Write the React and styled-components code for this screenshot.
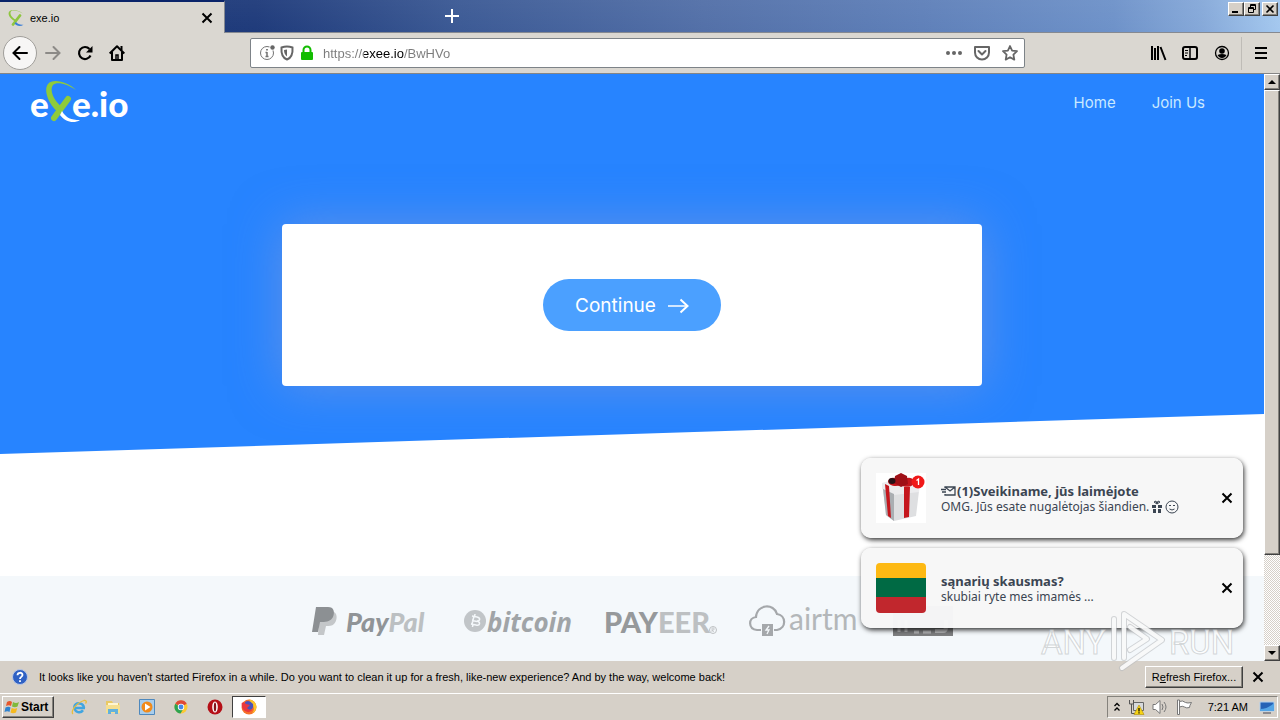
import React from "react";
import styled, { createGlobalStyle, css } from "styled-components";

const uiFont = `"Liberation Sans", Tahoma, sans-serif`;
const siteFont = `Inter, Montserrat, sans-serif`;

const GlobalStyle = createGlobalStyle`
  *, *::before, *::after { box-sizing: border-box; }
  body { margin: 0; font-family: ${uiFont}; font-size: 11px; color: #000; background: #d6d0c8; }
  button { font: inherit; color: inherit; padding: 0; margin: 0; }
  svg { display: block; flex: none; overflow: visible; }
`;

const Desktop = styled.div`
  display: flex;
  flex-direction: column;
  min-height: 100vh;
`;

/* ---------- browser chrome ---------- */

const TitleBar = styled.header`
  display: flex;
  height: 33px;
  border-bottom: 1px solid #858991;
  background:
    linear-gradient(180deg, rgba(255, 255, 255, 0.04), rgba(255, 255, 255, 0)),
    linear-gradient(90deg, #1a3878 0%, #1f3b7b 20%, #3c5a95 36%, #5370a8 55%, #5f80b9 72%, #6e92c9 87%, #86a9d9 94%, #a4c8ef 100%);
`;

const Tab = styled.div`
  display: flex;
  align-items: center;
  gap: 6px;
  width: 225px;
  height: 33px;
  padding: 0 9px 0 8px;
  border-top: 2px solid #0a246a;
  border-right: 1px solid #858991;
  background: #dad7d1;
`;

const TabTitle = styled.span`
  flex: 1;
  line-height: 16px;
`;

const PlainButton = styled.button`
  display: flex;
  align-items: center;
  justify-content: center;
  width: ${(p) => p.$w || 16}px;
  height: ${(p) => p.$h || 16}px;
  border: 0;
  background: none;
`;

const NewTab = styled(PlainButton)`
  height: 32px;
  width: 32px;
  margin-left: 211px;
`;

const WindowControls = styled.div`
  display: flex;
  margin-left: auto;
  padding: 2px 2px 0 0;
`;

const raised = css`
  border: 1px solid;
  border-color: #fff #404040 #404040 #fff;
  box-shadow: inset -1px -1px 0 #85827c;
  background: #d6d0c8;
`;

const WindowButton = styled.button`
  ${raised}
  display: flex;
  align-items: center;
  justify-content: center;
  width: 16px;
  height: 14px;
  margin-left: ${(p) => (p.$apart ? 2 : 0)}px;
`;

const Toolbar = styled.nav`
  display: flex;
  align-items: center;
  height: 41px;
  border-bottom: 1px solid #858585;
  background: #dad7d1;
`;

const ToolGroup = styled.div`
  display: flex;
  align-items: center;
  width: ${(p) => p.$w}px;
  padding-left: ${(p) => p.$pad}px;
`;

const BackButton = styled.button`
  display: flex;
  align-items: center;
  justify-content: center;
  width: 34px;
  height: 34px;
  border: 1px solid #a09e9a;
  border-radius: 50%;
  background: #f7f6f5;
`;

const UrlBar = styled.div`
  display: flex;
  align-items: center;
  flex: 1;
  gap: 4px;
  height: 30px;
  padding: 0 2px 0 8px;
  border: 1px solid #7d8388;
  border-radius: 2px;
  background: #fff;
`;

const UrlInput = styled.input`
  flex: 1;
  min-width: 0;
  height: 24px;
  padding: 0;
  margin-left: 4px;
  border: 0;
  outline: 0;
  font-family: ${uiFont};
  font-size: 13px;
  color: transparent;
  background: linear-gradient(90deg, #7b7b7b 41px, #000 41px, #000 81px, #7b7b7b 81px);
  background-clip: text;
  -webkit-background-clip: text;
`;

const Separator = styled.span`
  width: 1px;
  height: 33px;
  margin: 0 3px 0 3px;
  background: #bfbcb7;
`;

/* ---------- web page ---------- */

const Viewport = styled.div`
  position: relative;
  display: flex;
  flex: 1;
`;

const Page = styled.main`
  display: flex;
  flex-direction: column;
  flex: 1;
  min-width: 0;
  background: #fff;
`;

const Hero = styled.section`
  padding-bottom: 68px;
  background: #2784ff;
  clip-path: polygon(0 0, 100% 0, 100% calc(100% - 40px), 0 100%);
`;

const SiteHeader = styled.div`
  display: flex;
  align-items: center;
  justify-content: space-between;
  height: 58px;
  padding: 0 59px 0 30px;
`;

const SiteNav = styled.nav`
  display: flex;
  gap: 36px;
`;

const SiteLink = styled.a`
  font-family: ${siteFont};
  font-size: 15px;
  line-height: 20px;
  color: #c9e9ff;
  text-decoration: none;
`;

const Card = styled.div`
  display: flex;
  align-items: center;
  justify-content: center;
  max-width: 700px;
  height: 162px;
  margin: 92px auto 0;
  border-radius: 4px;
  background: #fff;
  box-shadow: 0 0 50px rgba(154, 160, 210, 0.5);
`;

const ContinueButton = styled.button`
  display: flex;
  align-items: center;
  justify-content: center;
  gap: 12px;
  width: 178px;
  height: 52px;
  border: 0;
  border-radius: 26px;
  background: #4ba0ff;
  color: #fff;
  font-family: ${siteFont};
  font-size: 19px;
`;

const Partners = styled.section`
  display: flex;
  flex: 1;
  justify-content: center;
  gap: 32px;
  min-height: 85px;
  margin-top: 122px;
  padding-top: 30px;
  background: #f4f8fb;
`;

/* ---------- scrollbar ---------- */

const ScrollBar = styled.div`
  display: flex;
  flex-direction: column;
  width: 16px;
  background: repeating-conic-gradient(#fff 0 25%, #d6d0c8 0 50%) 0 0 / 2px 2px;
`;

const ScrollButton = styled.button`
  ${raised}
  display: flex;
  align-items: center;
  justify-content: center;
  height: 16px;
`;

const ScrollThumb = styled.div`
  ${raised}
  flex: 465;
`;

const ScrollRest = styled.div`
  flex: 90;
`;

/* ---------- notifications over the page ---------- */

const ToastStack = styled.aside`
  position: absolute;
  right: 37px;
  bottom: 33px;
  display: flex;
  flex-direction: column;
  gap: 10px;
  width: 382px;
`;

const Toast = styled.article`
  display: flex;
  align-items: center;
  height: 80px;
  padding: 0 10px 0 15px;
  border-radius: 10px;
  background: rgba(247, 247, 247, 0.98);
  box-shadow: 1px 2px 5px rgba(0, 0, 0, 0.8);
`;

const ToastText = styled.div`
  flex: 1;
  margin-left: 15px;
  padding-top: 2px;
  font-family: "Noto Sans", "Open Sans", sans-serif;
  font-size: 13px;
  line-height: 16px;
  color: #3b4552;
`;

const ToastTitle = styled.strong`
  display: flex;
  align-items: center;
`;

const ToastBody = styled.span`
  display: flex;
  align-items: center;
  gap: 2px;
  font-size: 12px;
`;

const Watermark = styled.div`
  position: absolute;
  right: 46px;
  bottom: -12px;
  pointer-events: none;
`;

/* ---------- info bar and taskbar ---------- */

const InfoBar = styled.div`
  display: flex;
  align-items: center;
  height: 32px;
  padding: 0 14px 0 12px;
  background: #d6d0c8;
`;

const InfoText = styled.span`
  flex: 1;
  margin-left: 11px;
`;

const RefreshButton = styled.button`
  ${raised}
  width: 98px;
  height: 22px;
  margin-right: 7px;
`;

const Taskbar = styled.footer`
  display: flex;
  align-items: center;
  height: 27px;
  padding: 0 2px;
  border-top: 1px solid #fff;
  background: #d6d0c8;
`;

const StartButton = styled.button`
  ${raised}
  display: flex;
  align-items: center;
  gap: 1px;
  width: 52px;
  height: 22px;
  padding-left: 1px;
  font-weight: 700;
  font-size: 12px;
`;

const QuickLaunch = styled.div`
  display: flex;
  align-items: center;
  margin-left: 8px;
`;

const TaskButton = styled.button`
  display: flex;
  align-items: center;
  justify-content: center;
  width: 34px;
  height: 22px;
  border: 1px solid;
  border-color: ${(p) => (p.$active ? "#404040 #fff #fff #404040" : "transparent")};
  background: ${(p) => (p.$active ? "#fff" : "none")};
`;

const Tray = styled.div`
  display: flex;
  align-items: center;
  gap: 8px;
  height: 22px;
  margin-left: auto;
  padding: 0 2px 0 6px;
  border: 1px solid;
  border-color: #85827c #fff #fff #85827c;
`;

const Clock = styled.time`
  margin: 0 3px 0 8px;
`;

/* ---------- icons ---------- */

const Icon = ({ size = 16, w, h, vb, children, ...rest }) => (
  <svg width={w || size} height={h || size} viewBox={vb || `0 0 ${w || size} ${h || size}`} fill="none" aria-hidden="true" {...rest}>
    {children}
  </svg>
);

const Cross = () => (
  <Icon size={12} stroke="#000" strokeWidth="2"><path d="M1.500 1.500l9 9M10.500 1.500l-9 9" /></Icon>
);

const Favicon = () => (
  <Icon size={16}>
    <path d="M15 3.500C9 0 3-.5 2.500 2.500c-.5 3 3 6.500 6.500 8l-1 1.500C3.500 9.500-.5 5.500.8 2.200 2.500-1.500 10-.5 15 3.500z" fill="#8fc63f" />
    <path d="M12 5.500L5 14.500" stroke="#8fc63f" strokeWidth="2.800" strokeLinecap="round" />
    <path d="M8 12c2 2.300 4 3 7.500 2.700-2.800 2-7 1.600-9-1.200z" fill="#3d7fd6" />
  </Icon>
);

const SiteLogo = () => (
  <svg width="100" height="44" viewBox="0 0 100 44" role="img" aria-label="exe.io">
    <g fill="#fff" fontFamily="Lato, sans-serif" fontWeight="900" fontSize="35">
      <text x="0" y="36">e</text>
      <text x="42" y="36">e.io</text>
    </g>
    <path d="M46 9C37 3 27 0 23 4c-4 5 1 16 9 22l-4 5C19 24 13 9 18 3c5-6 20-2 28 6z" fill="#8fcb3b" />
    <path d="M38 18L24 37" stroke="#8fcb3b" strokeWidth="6" strokeLinecap="round" />
    <path d="M32 30c4 7 9 9 18 9-6 4-15 2-20-5z" fill="#fff" />
  </svg>
);

const PayPal = () => (
  <svg width="119" height="36" viewBox="0 0 119 36" role="img" aria-label="PayPal">
    <path d="M8 6h14c4 2 3 9 0 12-2 2-5 2-8 2l-2 9H6z" fill="#c4c7c9" />
    <path d="M4 1h12c6 0 7 5 5 10-2 4-6 5-11 5H8L6 26H0z" fill="#8c9093" />
    <text x="34" y="26" fill="#909497" fontFamily="Lato, sans-serif" fontStyle="italic" fontWeight="900" fontSize="27">
      Pay<tspan fill="#bcc0c2">Pal</tspan>
    </text>
  </svg>
);

const Bitcoin = () => (
  <svg width="111" height="40" viewBox="0 0 111 40" role="img" aria-label="bitcoin">
    <circle cx="12" cy="15" r="11" fill="#c1c5c8" />
    <path d="M9 10l5 1c4 1 3 4 0 4 4 1 3 5-1 4l-5-1M11 10l-2 8M12 8l-.5 3M10 18l-.5 3M9 14.500l5 1" stroke="#f4f8fb" strokeWidth="1.500" fill="none" />
    <text x="24" y="26" fill="#a0a4a7" fontFamily="Open Sans, sans-serif" fontStyle="italic" fontWeight="700" fontSize="26">bitcoin</text>
  </svg>
);

const Payeer = () => (
  <svg width="111" height="40" viewBox="0 0 111 40" role="img" aria-label="PAYEER">
    <text x="-2" y="27" fill="#96999b" fontFamily="Lato, sans-serif" fontWeight="900" fontSize="29">
      PAY<tspan fill="#bdc0c2">EER</tspan>
    </text>
    <circle cx="107" cy="24" r="3.500" stroke="#bdc0c2" fill="none" />
    <path d="M106 26v-4h2v2h-2l2 2" stroke="#bdc0c2" strokeWidth=".7" fill="none" />
  </svg>
);

const Airtm = () => (
  <svg width="112" height="40" viewBox="0 0 112 40" role="img" aria-label="airtm">
    <path d="M12 24H8c-9-1-9-12-1-13C8-2 25-3 28 8c9 1 10 14 0 16h-3" stroke="#a5a8ab" strokeWidth="2.200" fill="none" />
    <path d="M13 18h11v12H13z" fill="#a5a8ab" />
    <path d="M20 20l-3 4h3l-2 4" stroke="#f4f8fb" strokeWidth="1.300" fill="none" />
    <text x="40" y="24" fill="#b3b7b9" fontFamily="Lato, sans-serif" fontSize="30">airtm</text>
  </svg>
);

const PlainBadge = () => (
  <Icon w={60} h={32}>
    <path d="M0 0h60v30H0z" fill="#7e7f80" />
    <path d="M6 26V14M13 26V14M21 26h5M30 26h8" stroke="#b5b6b7" strokeWidth="3" />
    <path d="M42 25h8q3 0 3-4v-7" stroke="#b5b6b7" strokeWidth="4" />
  </Icon>
);

const Gift = () => (
  <Icon size={50}>
    <path d="M0 0h50v50H0z" fill="#fff" />
    <path d="M7 16l12 5 24-3-3 25-22 5-8-6z" fill="#dedfe1" />
    <path d="M6 10l18-5 20 5-1 9-25 3L6 16z" fill="#ececee" />
    <path d="M7 16l11 5v27l-8-6z" fill="#aaaeb2" />
    <path d="M28 14h6l-1 30-5 1zM9 11l4 2 2 32-3-2z" fill="#c5161d" />
    <path d="M25 9c-5-6-12-5-13-1 0 5 8 6 13 4 6 4 14 1 13-4-2-5-9-3-12-1z" fill="#c5161d" />
    <path d="M19 3l6-3 6 3 1 8-7 3-7-4z" fill="#9f1017" />
    <ellipse cx="16" cy="8" rx="3.500" ry="3" fill="#251116" />
    <circle cx="42" cy="9" r="6.500" fill="#f01818" />
    <path d="M40.500 7.500l2-1.500v6" stroke="#fff" strokeWidth="1.300" />
  </Icon>
);

const Flag = () => (
  <Icon size={50}>
    <clipPath id="flagCorners"><rect width="50" height="50" rx="4" /></clipPath>
    <g clipPath="url(#flagCorners)">
      <path d="M0 0h50v15H0z" fill="#fdb913" />
      <path d="M0 15h50v19H0z" fill="#006a44" />
      <path d="M0 34h50v16H0z" fill="#c1272d" />
    </g>
  </Icon>
);

const App = () => (
  <>
    <GlobalStyle />
    <Desktop>
      <TitleBar>
        <Tab>
          <Favicon />
          <TabTitle>exe.io</TabTitle>
          <PlainButton aria-label="Close tab"><Cross /></PlainButton>
        </Tab>
        <NewTab aria-label="New tab">
          <Icon size={14} stroke="#fff" strokeWidth="2"><path d="M7 0v14M0 7h14" /></Icon>
        </NewTab>
        <WindowControls>
          <WindowButton aria-label="Minimize"><Icon size={10}><path d="M1 7h6v2H1z" fill="#000" /></Icon></WindowButton>
          <WindowButton aria-label="Restore">
            <Icon size={10} stroke="#000"><path d="M3.500 3V.5h5v5H6M3 1.500h6M1.500 3.500h5v5h-5zM1 4.500h6" /></Icon>
          </WindowButton>
          <WindowButton aria-label="Close" $apart><Icon size={10} stroke="#000" strokeWidth="1.600"><path d="M1.500 1.500l7 7M8.500 1.500l-7 7" /></Icon></WindowButton>
        </WindowControls>
      </TitleBar>

      <Toolbar aria-label="Navigation">
        <ToolGroup $w={250} $pad={3}>
          <BackButton aria-label="Back">
            <Icon size={16} stroke="#000" strokeWidth="2" strokeLinecap="round"><path d="M15 8H2M7.500 2L1.500 8l6 6" /></Icon>
          </BackButton>
          <PlainButton $w={32} $h={32} aria-label="Forward">
            <Icon size={16} stroke="#8c8a87" strokeWidth="2" strokeLinecap="round"><path d="M1 8h13M8.500 2l6 6-6 6" /></Icon>
          </PlainButton>
          <PlainButton $w={32} $h={32} aria-label="Reload">
            <Icon size={16} stroke="#000" strokeWidth="2.200"><path d="M13.500 10.500A6 6 0 1 1 12.500 4" /><path d="M15.500 1v6.500H9z" fill="#000" stroke="none" /></Icon>
          </PlainButton>
          <PlainButton $w={32} $h={32} aria-label="Home">
            <Icon size={16} stroke="#000" strokeWidth="2"><path d="M.7 8.500L8 1.300l7.300 7.200M3 7v8h10V7" strokeLinejoin="round" /><path d="M7 14v-4h2v4" strokeWidth="1.500" /><path d="M12.500 1v4" /></Icon>
          </PlainButton>
        </ToolGroup>
        <UrlBar>
          <Icon size={16} stroke="#737373"><circle cx="8" cy="8" r="6.500" /><path d="M8 7v5M6.500 7.500H8M6.500 11.500h3" strokeWidth="1.500" /><path d="M8 4v1.500" strokeWidth="1.800" /><circle cx="13.500" cy="2.500" r="3" fill="#fff" stroke="none" /><circle cx="13.500" cy="2.500" r="2.200" fill="#666" stroke="none" /></Icon>
          <Icon size={16} stroke="#666" strokeWidth="2"><path d="M2.500 2.500Q8 .5 13.500 2.500C14 9 12 13 8 14.500 4 13 2 9 2.500 2.500z" /><path d="M8 4.500v7C6 10 5 8 5 5z" fill="#666" stroke="none" /></Icon>
          <Icon size={16}><rect x="2" y="7" width="12" height="8" rx="1" fill="#12bc00" /><path d="M4.500 7V5a3.500 3.500 0 0 1 7 0v2" stroke="#12bc00" strokeWidth="2" /></Icon>
          <UrlInput aria-label="Address" defaultValue="https://exee.io/BwHVo" spellCheck={false} />
          <PlainButton $w={24} aria-label="Page actions"><Icon size={16}><g fill="#666"><circle cx="2" cy="8" r="2" /><circle cx="8" cy="8" r="2" /><circle cx="14" cy="8" r="2" /></g></Icon></PlainButton>
          <PlainButton $w={24} aria-label="Save to Pocket"><Icon size={16} stroke="#666" strokeWidth="2" strokeLinejoin="round"><path d="M1 2h14v5.500a7 7 0 0 1-14 0z" /><path d="M4.500 6L8 9.500 11.500 6" strokeLinecap="round" /></Icon></PlainButton>
          <PlainButton $w={24} aria-label="Bookmark"><Icon size={16} stroke="#666" strokeWidth="1.800" strokeLinejoin="round"><path d="M8 1l2.100 4.600 4.900.6-3.600 3.400.9 5L8 12.200l-4.300 2.400.9-5L1 6.200l4.900-.6z" /></Icon></PlainButton>
        </UrlBar>
        <ToolGroup $w={255} $pad={117}>
          <PlainButton $w={32} $h={32} aria-label="Library"><Icon size={16} stroke="#000" strokeWidth="2"><path d="M2 1v14M5 3v12M8 1v14M10.500 2l5 13" /></Icon></PlainButton>
          <PlainButton $w={32} $h={32} aria-label="Sidebar"><Icon size={16} stroke="#000" strokeWidth="2"><rect x="1" y="2" width="14" height="12" rx="2" /><path d="M8 2v12" strokeWidth="1.500" /><path d="M3 5.500h3M3 8h3M3 10.500h2" strokeWidth="1" /></Icon></PlainButton>
          <PlainButton $w={32} $h={32} aria-label="Account"><Icon size={16} stroke="#000"><circle cx="8" cy="8" r="6.500" strokeWidth="1.300" /><circle cx="8" cy="6" r="2.800" fill="#000" stroke="none" /><path d="M3.500 10Q8 8 12.500 10 11 13 8 13T3.500 10z" fill="#000" stroke="none" /></Icon></PlainButton>
          <Separator />
          <PlainButton $w={32} $h={32} aria-label="Menu"><Icon size={12} stroke="#000" strokeWidth="2"><path d="M0 1h12M0 6h12M0 11h12" /></Icon></PlainButton>
        </ToolGroup>
      </Toolbar>

      <Viewport>
        <Page>
          <Hero>
            <SiteHeader>
              <SiteLogo />
              <SiteNav>
                <SiteLink href="#home">Home</SiteLink>
                <SiteLink href="#join">Join Us</SiteLink>
              </SiteNav>
            </SiteHeader>
            <Card>
              <ContinueButton>
                Continue
                <Icon w={21} h={12} stroke="#fff" strokeWidth="1.500"><path d="M0 7h19" /><path d="M12.500 .5L19.500 7l-7 6.500" strokeWidth="2" /></Icon>
              </ContinueButton>
            </Card>
          </Hero>
          <Partners>
            <PayPal />
            <Bitcoin />
            <Payeer />
            <Airtm />
            <PlainBadge />
          </Partners>
        </Page>
        <ScrollBar>
          <ScrollButton aria-label="Scroll up"><Icon w={8} h={4}><path d="M0 4l4-4 4 4z" fill="#000" /></Icon></ScrollButton>
          <ScrollThumb />
          <ScrollRest />
          <ScrollButton aria-label="Scroll down"><Icon w={8} h={4}><path d="M0 0h8L4 4z" fill="#000" /></Icon></ScrollButton>
        </ScrollBar>

        <ToastStack>
          <Toast>
            <Gift />
            <ToastText>
              <ToastTitle>
                <Icon w={16} h={12} stroke="#3b4552" strokeWidth="1.300"><path d="M4 3V2h10v8H4V9M4 2l5 4 5-4M0 4.500h5M1 7h4" /></Icon>
                (1)Sveikiname, jūs laimėjote
              </ToastTitle>
              <ToastBody>
                OMG. Jūs esate nugalėtojas šiandien.
                <Icon w={12} h={14}><path d="M1 5h4v3H1zM7 5h4v3H7zM2 9h3v4H2zM7 9h3v4H7z" fill="#3b4552" /><path d="M6 4L3 2l2-1 1 3 1-3 2 1z" stroke="#3b4552" /></Icon>
                <Icon size={14} stroke="#3b4552"><circle cx="7" cy="7" r="6" /><path d="M4 5.500h2M8 5.500h2M4.500 9Q7 11 9.500 9" /></Icon>
              </ToastBody>
            </ToastText>
            <PlainButton $w={12} aria-label="Close notification"><Cross /></PlainButton>
          </Toast>
          <Toast>
            <Flag />
            <ToastText>
              <ToastTitle>sąnarių skausmas?</ToastTitle>
              <ToastBody>skubiai ryte mes imamės ...</ToastBody>
            </ToastText>
            <PlainButton $w={12} aria-label="Close notification"><Cross /></PlainButton>
          </Toast>
        </ToastStack>

        <Watermark>
          <svg width="196" height="64" viewBox="0 0 196 64" role="img" aria-label="ANY RUN">
            <g fill="#fff" fillOpacity=".75" stroke="#b9bdc0" strokeOpacity=".6" strokeWidth="1" fontFamily="Roboto, sans-serif" fontSize="33">
              <text x="3" y="45">ANY</text>
              <text x="131" y="45">RUN</text>
            </g>
            <g fill="none" strokeLinejoin="round" strokeLinecap="round">
              <g stroke="#b9bdc0" strokeOpacity=".6" strokeWidth="6">
                <path d="M76 49V10M86 49V5l38 26-40 28M92 41l17-11-17-12" />
              </g>
              <g stroke="#fff" strokeOpacity=".85" strokeWidth="4">
                <path d="M76 49V10M86 49V5l38 26-40 28M92 41l17-11-17-12" />
              </g>
            </g>
          </svg>
        </Watermark>
      </Viewport>

      <InfoBar>
        <Icon size={16}><circle cx="8" cy="8" r="7.500" fill="#2f61c4" stroke="#b9c7e4" /><path d="M5.500 6.200C5.500 3 10.500 3 10.500 6 10.500 8 8 7.800 8 10M8 11.300v1.700" stroke="#fff" strokeWidth="1.800" /></Icon>
        <InfoText>It looks like you haven't started Firefox in a while. Do you want to clean it up for a fresh, like-new experience? And by the way, welcome back!</InfoText>
        <RefreshButton>R<u>e</u>fresh Firefox...</RefreshButton>
        <PlainButton aria-label="Dismiss"><Cross /></PlainButton>
      </InfoBar>

      <Taskbar>
        <StartButton>
          <Icon size={16}><path d="M3 3q3-2 5 0L7 7Q5 5.500 2 7z" fill="#e8572b" /><path d="M9 3q3 2 6 0l-1.500 4.500Q11 9 8 7.500z" fill="#80b93c" /><path d="M1.500 8.500q3-1.500 5 0l-1 4.500q-2-1.500-5 0z" fill="#2f83cf" /><path d="M7.700 9q3 1.500 5.500 0L12 13.500q-3 1.500-5.500 0z" fill="#f6b91e" /></Icon>
          Start
        </StartButton>
        <QuickLaunch>
          <TaskButton aria-label="Internet Explorer">
            <Icon size={16}><path d="M14 9H3.500a4.700 4.700 0 0 0 8.500 2.300M13 9A5 5 0 0 0 3.200 8" stroke="#41a5e0" strokeWidth="2.500" /><path d="M2 15C-1 13 5 4 13 1.500c3-.5 2.500 2 1.500 3" stroke="#e8bd3a" strokeWidth="1.300" /></Icon>
          </TaskButton>
          <TaskButton aria-label="File Explorer">
            <Icon size={16}><path d="M1 2h6l1 2h6v10H1z" fill="#e9c964" /><path d="M3 4h10v4H3z" fill="#fff6d2" /><path d="M1 6h14v8H1z" fill="#f5df91" /><path d="M3 15v-5h10v5h-3v-2H6v2z" fill="#62b1dc" /></Icon>
          </TaskButton>
          <TaskButton aria-label="Media Player">
            <Icon size={16}><path d="M.5.5h15v15H.5z" fill="#a8cdec" stroke="#4e88bd" /><circle cx="8" cy="8" r="5.500" fill="#f18a1a" /><path d="M6 4.500L11.500 8 6 11.500z" fill="#fff" /></Icon>
          </TaskButton>
          <TaskButton aria-label="Chrome">
            <Icon size={16}><circle cx="8" cy="8" r="6.500" fill="#fcc934" /><path d="M8 8L2.300 4.700A6.500 6.500 0 0 1 13.700 4.700z" fill="#df4937" /><path d="M8 8h-1L2.300 4.700A6.500 6.500 0 0 0 7.500 14.500L10.500 9.500z" fill="#2da351" /><circle cx="8" cy="8" r="3.200" fill="#fff" /><circle cx="8" cy="8" r="2.400" fill="#4688e8" /></Icon>
          </TaskButton>
          <TaskButton aria-label="Opera">
            <Icon size={16}><circle cx="8" cy="8" r="7.500" fill="#b50f17" /><ellipse cx="8" cy="8" rx="2.800" ry="5.500" fill="#fff" /><ellipse cx="8" cy="8" rx="1.200" ry="4.500" fill="#83141a" /></Icon>
          </TaskButton>
          <TaskButton $active aria-label="Firefox">
            <Icon size={16}><circle cx="8" cy="8" r="7.500" fill="#f6702a" /><path d="M8 .5q7 1 7.500 7.500Q15 13 11 14.500 15 9 11 6z" fill="#fbc52c" /><path d="M4 3q4-3 8 2 1 5-3 6-5 0-5-4z" fill="#4a52bb" /><path d="M.7 4Q3 2 5 5l4 1-3 3q2 3 6 1-3 5-8 2Q0 9 .7 4z" fill="#e9373e" /></Icon>
          </TaskButton>
        </QuickLaunch>
        <Tray>
          <Icon w={6} h={10} stroke="#000" strokeWidth="1.300"><path d="M.5 4L3 1.500 5.500 4M.5 8.500L3 6l2.500 2.500" /></Icon>
          <Icon size={16}><path d="M5.500 3.500h10v8h-10z" fill="#d7dadd" stroke="#666" /><path d="M1.500 1v4h4V1M3.500 5v9.500H8" stroke="#555" /><path d="M11 6l5 9.500H6z" fill="#f7d414" stroke="#ad8c08" strokeWidth=".6" /><path d="M11 9v3.500M11 13.300v1.200" stroke="#000" strokeWidth="1.200" /></Icon>
          <Icon size={16} stroke="#777"><path d="M1 5.500h2.500L8 1.500v13l-4.500-4H1z" fill="#fff" /><path d="M10 5q2 3 0 6M12 3q4 5 0 10" /></Icon>
          <Icon size={16}><path d="M1.500 1v14.500h2V1z" fill="#fff" stroke="#777" /><path d="M3.500 2.500q3-1.500 6 1 2 1 6 0-2 3-2 5-3 1-5-.5t-5 0z" fill="#fff" stroke="#777" /></Icon>
          <Clock>7:21 AM</Clock>
          <Icon size={16}><path d="M1 3h14v9H1z" fill="#2562b6" stroke="#b3d1ef" /><path d="M1 10q8 0 14-6v8H1z" fill="#55a5e6" /><path d="M4 14h8" stroke="#445" /></Icon>
        </Tray>
      </Taskbar>
    </Desktop>
  </>
);

export default App;
